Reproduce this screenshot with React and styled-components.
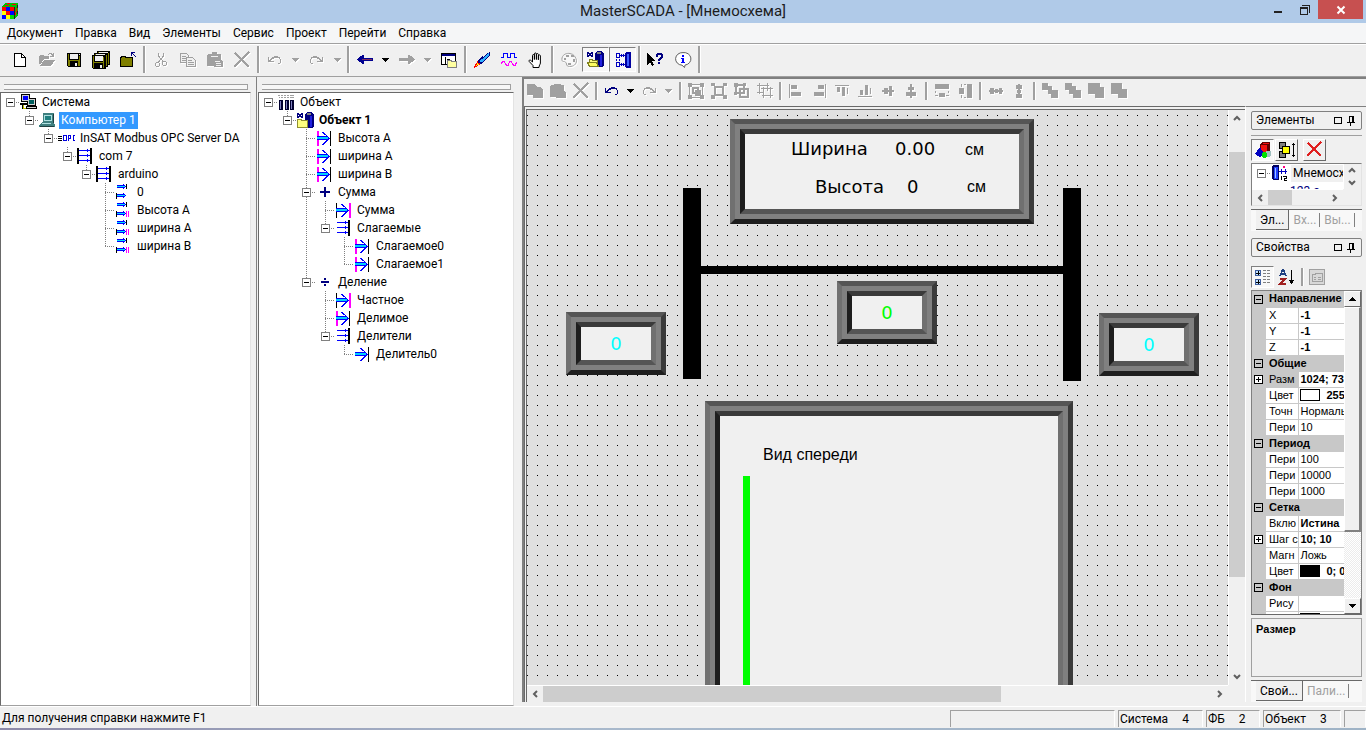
import React from 'react';
import styled, { createGlobalStyle, css } from 'styled-components';

const Global = createGlobalStyle`
  * { box-sizing: border-box; }
  html, body, #root { height: 100%; margin: 0; }
  body { background: #f0f0f0; color: #000; font: 12px/18px Roboto, "Open Sans", "Noto Sans", sans-serif; overflow: hidden; }
  button { font: inherit; color: inherit; background: none; border: 0; padding: 0; margin: 0; }
  ul { list-style: none; margin: 0; padding: 0; }
  svg { display: block; flex: none; overflow: visible; }
`;

/* ---------- window shell ---------- */
const Shell = styled.div`display: flex; flex-direction: column; height: 100vh; min-height: 0;`;
const TitleBar = styled.header`
  display: grid; grid-template-columns: 1fr auto 1fr; height: 23px; flex: none; background: #b0cae8;
`;
const AppMark = styled.div`padding: 3px 0 0 2px;`;
const Title = styled.h1`margin: 0; font-size: 15px; line-height: 23px; font-weight: 400; color: #1c1c1c;`;
const Caption = styled.div`display: flex; justify-content: flex-end; padding-right: 3px;`;
const CaptionButton = styled.button`
  width: ${p => (p.$close ? 45 : 27)}px; height: 19px; display: grid; place-items: center;
  background: ${p => (p.$close ? '#c75050' : 'transparent')};
`;
const MenuBar = styled.nav`
  display: flex; height: 21px; flex: none; background: #f5f6f7; border-bottom: 1px solid #a0a0a0; padding-left: 1px;
`;
const MenuItem = styled.button`padding: 0 6px; height: 20px; line-height: 20px;`;
const Toolbar = styled.div`
  display: flex; align-items: center; height: 33px; flex: none; padding: 0 0 2px 6px;
  border-top: 1px solid #fff; border-bottom: 1px solid #a0a0a0;
`;
const ToolButton = styled.button`
  width: ${p => p.$w || 27}px; height: 25px; display: grid; place-items: center; flex: none;
  ${p => p.disabled && css`svg { filter: drop-shadow(1px 1px 0 #fff); }`}
  ${p => p.$pressed && css`
    border: 1px solid; border-color: #808080 #fff #fff #808080; background: #f7f7f7;
  `}
`;
const Separator = styled.span`
  width: ${p => p.$w || 6}px; height: ${p => (p.$w ? 18 : 27)}px; flex: none;
  &::before { content: ''; display: block; width: 2px; height: 100%; margin: 0 auto;
    background: #a0a0a0; border-right: 1px solid #fff; }
`;

/* ---------- body ---------- */
const Work = styled.main`display: flex; flex: 1; min-height: 0;`;
const Dock = styled.section`
  display: flex; flex-direction: column; flex: none; width: ${p => p.$w}px; padding: 7px ${p => p.$pr}px 0 ${p => p.$pl}px;
  border-left: ${p => p.$pl}px solid #808080;
`;
const Grip = styled.div`
  height: 6px; margin: 0 3px 2px 4px; border: solid #a0a0a0; border-width: 1px 1px 1px 0; flex: none; background: #f7f7f7;
`;
const TreeBox = styled.ul`
  flex: 1; min-height: 0; background: #fff; border: 1px solid #696969; border-right-color: #e3e3e3; border-bottom-color: #a0a0a0;
  overflow: hidden;
`;
const TreeRow = styled.li`display: flex; height: 18px; align-items: center;`;
const dotV = 'repeating-linear-gradient(#808080 0 1px, transparent 1px 2px)';
const dotH = 'repeating-linear-gradient(90deg, #808080 0 1px, transparent 1px 2px)';
const GuideCell = styled.span`
  width: 19px; height: 18px; flex: none; display: grid; place-items: center;
  background-repeat: no-repeat;
  background-image: ${p => (p.$v ? dotV : 'none')}, ${p => (p.$elbow ? dotH : 'none')};
  background-size: 1px ${p => (p.$v === 'half' ? 9 : 18)}px, 10px 1px;
  background-position: 9px 0, 9px 9px;
`;
const Expander = styled.button`
  && { width: 9px; height: 9px; border: 1px solid #808080; background: #fff; display: grid; place-items: center; }
  &::before { content: ''; width: 5px; height: 1px; background: #000; }
`;
const NodeIcon = styled.span`width: 20px; height: 18px; flex: none; display: grid; align-items: center;`;
const NodeLabel = styled.span`
  padding: 0 2px; line-height: 17px; white-space: nowrap;
  font-weight: ${p => (p.$bold ? 700 : 400)};
  ${p => p.$selected && css`background: #3399ff; color: #fff;`}
`;

/* ---------- mnemonic window ---------- */
const Child = styled.section`
  flex: 1; min-width: 0; display: flex; flex-direction: column; margin-bottom: 4px;
  border: solid #808080; border-width: 2px 0 0 2px;
`;
const ChildToolbar = styled.div`display: flex; align-items: center; height: 27px; flex: none; margin-left: -2px; padding-bottom: 3px; border-left: 1px solid #808080;`;
const ChildBody = styled.div`display: flex; flex: 1; min-height: 0;`;
const View = styled.div`
  flex: 1; min-width: 0; display: grid; grid-template: minmax(0, 1fr) 17px / minmax(0, 1fr) 17px;
  border: solid #696969; border-width: 4px 0 0 3px; border-style: double solid solid double; border-bottom: 0; border-right: 0;
`;
const Canvas = styled.div`
  position: relative; overflow: hidden; background: #e0e0e0 conic-gradient(from 270deg at 1px 1px, #000 90deg, transparent 0) 0 5px / 10px 10px;
`;
const Placed = styled.div`
  position: absolute; left: ${p => p.$x}px; top: ${p => p.$y}px;
  width: ${p => p.$w}px; height: ${p => p.$h}px;
`;
const Bevel = styled(Placed)`
  padding: 5px; background: #808080;
  border: 5px solid; border-color: #555 #3a3a3a #1e1e1e #707070;
`;
const Face = styled.div`
  height: 100%; background: #f0f0f0; border: 5px solid; border-color: #3a3a3a #707070 #555 #1e1e1e;
  display: grid; place-items: center; color: ${p => p.$c}; font: 18px/22px "DejaVu Sans", sans-serif;
`;
const Bar = styled(Placed)`background: ${p => p.$c || '#000'};`;
const CanvasText = styled.span`
  position: absolute; left: ${p => p.$x}px; top: ${p => p.$y}px; white-space: nowrap;
  font: ${p => (p.$plain ? '16px/20px "Liberation Sans"' : '18px/20px "DejaVu Sans"')}, sans-serif;
`;
const Scroll = styled.div`
  display: flex; flex-direction: ${p => (p.$v ? 'column' : 'row')}; background: #f0f0f0; min-width: 0; min-height: 0;
  border: solid #fff; border-width: ${p => (p.$v ? '0 0 0 1px' : '1px 0 0')};
`;
const ScrollButton = styled.button`width: ${p => p.$w || 16}px; height: ${p => p.$h || 16}px; flex: none; display: grid; place-items: center;`;
const Track = styled.div`flex: 1; display: flex; flex-direction: inherit; min-width: 0; min-height: 0;`;
const Gap = styled.span`flex: ${p => p.$n} 1 0;`;
const Thumb = styled.span`flex: ${p => p.$n} 1 0; background: #cdcdcd;`;

/* ---------- right side ---------- */
const Side = styled.aside`
  width: 121px; flex: none; display: flex; flex-direction: column; padding: 4px 4px 0 5px;
  border-left: 1px solid #fff; border-top: 1px solid #808080; min-height: 0;
`;
const PaneTitle = styled.h2`
  height: 19px; flex: none; margin: 0; font-size: 12px; line-height: 17px; font-weight: 400; border: 1px solid #808080; border-radius: 2px;
  display: flex; align-items: center; gap: 5px; padding: 0 6px 0 4px; span { flex: 1; }
`;
const PaneTools = styled.div`
  display: flex; align-items: center; height: 28px; margin-top: 5px; flex: none; border-top: 1px solid ${p => (p.$flat ? 'transparent' : '#a0a0a0')};
`;
const RaisedButton = styled.button`
  && { width: 23px; height: 22px; margin-right: ${p => p.$mr || 1}px; display: grid; place-items: center; flex: none;
  border: 1px solid; border-color: ${p => (p.$down ? '#808080 #fff #fff #808080' : p.$flat ? 'transparent' : '#fff #696969 #696969 #fff')};
  background: ${p => (p.$down ? '#f8f8f8' : '#f0f0f0')}; }
`;
const MiniTree = styled.div`
  height: 43px; flex: none; display: grid; grid-template: 25px 16px / minmax(0, 1fr) 18px;
  border: 1px solid; border-color: #808080 #e3e3e3 #e3e3e3 #808080;
`;
const MiniList = styled.div`background: #fff; overflow: hidden; ${NodeLabel} { background: #f0f0f0; }`;
const MiniRow = styled.div`display: flex; height: 18px; align-items: center;`;
const MiniChild = styled.div`padding-left: 38px; line-height: 18px; height: 18px; color: #000080; white-space: nowrap;`;
const Tabs = styled.div`
  height: 22px; margin-top: 3px; flex: none; display: flex; padding: 0 0 1px 5px; background: #f8f8f8; border-top: 1px solid #696969;
`;
const Tab = styled.button`
  && { flex: none; height: 20px; line-height: 20px; padding: 0 4px; color: #a0a0a0; position: relative;
  ${p => p.$on && css`color: #000; background: #f0f0f0; border: solid #696969; border-width: 0 1px 1px 0;`} }
  &:not(:first-child)::after { content: ''; position: absolute; right: 0; top: 3px; width: 1px; height: 14px; background: #808080; }
`;
const PaneSpacer = styled.div`height: 7px; flex: none;`;
const PropsBox = styled.div`
  flex: 1; min-height: 0; display: flex; border: 1px solid; border-color: #808080 #808080 #696969 #808080;
  overflow: hidden;
`;
const PropsScroll = styled.div`flex: 1; min-width: 0; overflow: hidden;`;
const PropsTable = styled.table`
  border-collapse: collapse; table-layout: fixed; width: 100%; font: 11px/15px "Liberation Sans", sans-serif;
  tr { height: 16px; }
  th, td { padding: 0 0 0 3px; height: 16px; text-align: left; white-space: nowrap; overflow: hidden; font-weight: 400;
    border-bottom: 1px solid #c8c8c8; background: #fff; }
  td { border-left: 1px solid #c8c8c8; }
`;
const PropMark = styled.td`
  && { width: 14px; background: #c8c8c8; padding: 0 0 0 2px; border: 0; }
`;
const GroupName = styled.th`&&& { background: #c8c8c8; font-weight: 700; }`;
const PropName = styled.th`&&& { ${p => p.$sel && css`background: #c8c8c8;`} }`;
const PropValue = styled.td`&& { padding-left: 2px; font-weight: ${p => (p.$b ? 700 : 400)}; }`;
const Swatch = styled.span`
  display: inline-block; vertical-align: middle; width: 20px; height: 12px; margin: 0 7px 1px -1px; border: 1px solid #000; background: ${p => p.$c};
`;
const Sign = styled.button`
  && { display: grid; place-items: center; width: 9px; height: 9px; border: 1px solid #000; background: ${p => (p.$plus ? '#fff' : 'transparent')}; }
`;
const OldScroll = styled.div`
  width: 17px; flex: none; display: flex; flex-direction: column;
  background: repeating-conic-gradient(#fff 0 25%, #ececec 0 50%) 0 0 / 2px 2px;
`;
const OldButton = styled.button`
  && { height: 16px; flex: none; display: grid; place-items: center; background: #f0f0f0; border: 1px solid; border-color: #fff #696969 #696969 #fff; }
`;
const OldThumb = styled.span`flex: 224 1 0; background: #f0f0f0; border: solid; border-width: 1px 2px 2px 1px; border-color: #fff #808080 #808080 #fff;`;
const Description = styled.div`
  height: 59px; flex: none; margin-top: 3px; border: 1px solid #a0a0a0; padding: 2px 4px; font: 700 11px/16px "Liberation Sans", sans-serif;
`;

/* ---------- status ---------- */
const Status = styled.footer`
  display: flex; gap: 3px; height: 22px; flex: none; padding: 3px 0 1px 2px; border-top: 1px solid #fff; line-height: 17px;
`;
const StatusHint = styled.span`flex: 1;`;
const StatusCell = styled.span`
  width: ${p => p.$w}px; border: solid #a0a0a0; border-width: 1px 0 0 1px; border-right: 1px solid #fff; padding-left: 1px;
  display: flex; gap: 14px; white-space: nowrap;
`;
const DesktopEdge = styled.div`height: 2px; flex: none; background: linear-gradient(90deg, #8c88a8, #a9b9cc 40%, #9fb3c6);`;

/* ---------- icons ---------- */
const G = '#a0a0a0';
const Svg = ({ w = 16, h = 16, children, smooth }) => (
  <svg width={w} height={h} viewBox={`0 0 ${w} ${h}`} fill="none" shapeRendering={smooth ? 'auto' : 'crispEdges'} aria-hidden="true">{children}</svg>
);
const Fill = ({ d, c = G }) => <path d={d} fill={c} />;
const Line = ({ d, c = G, w = 1, f = 'none' }) => <path d={d} stroke={c} strokeWidth={w} fill={f} />;

const IconCube = () => (
  <Svg>
    <Fill c="#00c000" d="M3 0h13v12l-4 4h-4V4H0z" />
    <Fill c="#ff0000" d="M0 4h4v4H0zM8 4h4v4H8zM4 8h4v4H4z" /><Fill c="#0000ff" d="M4 4h4v4H4zM8 8h4v4H8zM0 12h4v4H0z" />
    <Fill c="#ffff00" d="M0 8h4v4H0zM4 12h4v4H4z" /><Fill c="#00e000" d="M8 12h4v4H8z" />
    <Fill c="#ff0000" d="M5 0h3v1H5zM10 1h4v1h-4zM3 2h4v1H3zM14 5h1v4h-1zM13 9h1v3h-1z" />
    <Fill c="#202020" d="M12 4h1v12h-1zM15 2h1v3h-1zM15 8h1v3h-1z" />
  </Svg>
);
const IconNew = () => <Svg><Line c="#000" f="#fff" d="M2.500 1.500h7l4 4v9h-11z" /><Line c="#000" d="M9.500 1.500v4h4" /></Svg>;
const IconOpen = () => <Svg><Fill d="M0 4h1v-1h4v1h5v3H5l-3 5H0zM5 8h11l-4 6H1zM9 2h1v-1h3v1h1v-1h1v4h-4v-1h2v-1h-1V2h-2v1H9z" /></Svg>;
const IconSave = () => <Svg><Fill c="#000" d="M1 1h14v14H2l-1-1z" /><Fill c="#808000" d="M2 2h1v12H2zM13 4h1v10h-1zM3 8h10v1H3zM3 9h1v5H3zM12 9h1v5h-1z" /><Fill c="#f0f0f0" d="M4 2h8v5H4zM9 11h2v3H9zM13 2h1v1h-1z" /></Svg>;
const IconSaveAll = () => <Svg w={18} h={18}><Fill c="#000" d="M5 0h13v14h-2v2h-2v2H1l-1-1V4h2V2h3z" /><Fill c="#808000" d="M1 5h1v12H1zM3 3h1v1H3zM6 1h1v1H6zM16 2h1v11h-1zM14 4h1v11h-1zM11 6h1v11h-1zM2 11h10v1H2z" /><Fill c="#f0f0f0" d="M3 5h8v5H3zM4 3h9v1H4zM7 1h9v1H7zM8 14h2v3H8z" /></Svg>;
const IconUp = () => <Svg><Line c="#000" f="#808000" d="M.5 14.500v-9h1v-1h4v1h7v9z" /><Fill c="#000" d="M12 6h1v9H1v-1h11z" /><Fill c="#000080" d="M11 0h4v1h-2v1h1v1h1v1h1v1h-1V4h-1V3h-1V2h-1v2h-1z" /></Svg>;
const IconCut = () => <Svg><Line d="M5.500 1v3l5 6M10.500 1v3l-5 6" /><Line d="M3.500 10.500h2l1 1v2l-1 1h-2l-1-1v-2zM10.500 9.500h2l1 1v2l-1 1h-2l-1-1v-2z" /></Svg>;
const IconCopy = () => <Svg><Line f="#f0f0f0" d="M.5 1.500h6l2 2v7h-8z" /><Line d="M2 4.500h4M2 6.500h4M2 8.500h4" /><Line f="#f0f0f0" d="M6.500 5.500h6l3 3v6h-9z" /><Line d="M8 8.500h4M8 10.500h6M8 12.500h6" /></Svg>;
const IconPaste = () => <Svg><Fill d="M1 2h4V0h5v2h4v6h1l1 2v5H7v-1H0V3z" /><Line c="#f0f0f0" d="M4 4.500h7M8 9.500h5M9 11.500h5M9 13.500h5" /></Svg>;
const IconDelete = ({ c = G, s = 16 }) => <Svg w={s} h={s}><path d={`M1 1L${s - 1} ${s - 1}`} stroke={c} strokeWidth="2" /><path d={`M${s - 1} 0L0 ${s - 1}`} stroke={c} strokeWidth="1.6" /></Svg>;
const IconUndo = ({ c = G }) => <Svg w={13} h={10}><Fill c={c} d="M0 2h1v3h1V4h1V3h1V2h2V1h4v1h2v2h1v4h-1v1h-2V8h2V4h-1V3H6v1H4v1H3v1h3v1H0z" /></Svg>;
const IconRedo = ({ c = G }) => <Svg w={13} h={10}><Fill c={c} d="M13 2h-1v3h-1V4h-1V3H9V2H7V1H3v1H1v2H0v4h1v1h2V8H1V4h1V3h5v1h2v1h1v1H7v1h6z" /></Svg>;
const IconDrop = ({ c = G }) => <Svg w={7} h={4}><Fill c={c} d="M0 0h7v1H6v1H5v1H4v1H3V3H2V2H1V1H0z" /></Svg>;
const IconArrow = ({ c = G, back }) => <Svg w={16} h={9}><g transform={back ? 'matrix(-1 0 0 1 16 0)' : undefined}><Fill c={c} d="M0 3h9V0h2v1h2v1h1v1h1v1h1v1h-1v1h-1v1h-2v1h-1v1H9V6H0z" />{back && <Fill c="#803060" d="M1 4h10v1H1z" />}</g></Svg>;
const IconWindow = () => <Svg><Line c="#000" f="#fff" d="M.5 1.500h14v11H.5z" /><Fill c="#000080" d="M1 2h13v2H1z" /><Line c="#000" d="M4.500 5v7M6 7.500h3" /><Line c="#808080" f="#ffffa0" d="M6.500 15.500v-7h4v1h5v6z" /></Svg>;
const IconRocket = () => <Svg><Fill c="#000080" d="M16 0v3L8 12H5l-1-1V8l4-4 1 1 4-4z" /><Fill c="#30b0ff" d="M14 1h1v2l-7 7H6V8l1-1 1 1z" /><Fill c="#ff0000" d="M3 9h1v2h2v2H4v1H3v1H1v1H0v-2h1v-2h1v-1h1z" /><Fill c="#ffff00" d="M3 11h1v1h1v1H3v1H2v-1h1z" /></Svg>;
const IconWave = () => <Svg><Line c="#0000ff" d="M0 5.500h2.500v-4h4v4h3v-4h4v4H16" /><Line c="#ff00ff" d="M0 11.500l2-2h1l2 3v1h2v-1l2-3h1l2 3v1h2v-1l2-2" /></Svg>;
const IconHand = () => <Svg smooth><path d="M5 15.500v-2L1.200 9.500c-.7-1 .5-2 1.500-1.200L4.500 10V3.500c0-1.300 1.800-1.300 1.900 0V7.500 2c0-1.400 2-1.400 2 0v5.500-5c0-1.300 1.900-1.300 2 0v5.300-4c0-1.200 2-1.200 2 0V11c0 1.500-1.400 2-1.400 4.500z" fill="#fff" stroke="#000" /></Svg>;
const IconPalette = () => <Svg smooth><path d="M1 6C2 2 6 1 9 1.500c4 .5 6 4 6.500 7 0 4-3 6-7 6-2 0-3-1-3-2.500S4 9.500 2.500 9.500 .7 8 1 6z" stroke={G} fill="#f8f8f8" /><path d="M5 3h3v2H5zM10 3h3v2h-3zM3 6h2v2H3zM7 11h3v2H7zM12 7h2v3h-2z" fill={G} /></Svg>;
const IconTank = () => <Svg w={17} h={17}><Line c="#000080" d="M.5 1v5M5.500 1v5M1 1.500l4 4M5 1.500l-4 4" /><Fill c="#000080" d="M10 0h4l2 1 1 2v12l-2 1h-5l-2-2V2z" /><Fill c="#808080" d="M10 1h4v2h-4z" /><Fill c="#2020e0" d="M13 4h2v11h-2z" /><Line c="#909030" f="#ffff80" d="M.5 15.500v-8h4v1h6v7z" /></Svg>;
const IconTankOpen = () => <Svg w={17} h={17}><Line c="#000080" d="M.5 1v5M5.500 1v5M1 1.500l4 4M5 1.500l-4 4" /><Fill c="#000080" d="M10 0h4l2 1 1 2v12l-2 1h-5l-2-2V2z" /><Fill c="#808080" d="M10 1h4v2h-4z" /><Fill c="#2020e0" d="M13 4h2v11h-2z" /><Line c="#808020" f="#ffff80" d="M2.500 12v-4h3v1h5v3" /><Line c="#808020" f="#ffff60" d="M.5 11.500h9l2 4h-9z" /></Svg>;
const IconPipes = () => <Svg><Line c="#0000c0" d="M1.500 1.500h3v4h-3zM1.500 10.500h3v4h-3zM5 3.500h5M5 12.500h5M6.500 2v3M8.500 2v3M6.500 11v3M8.500 11v3M1.500 7v2M4.500 7v2" /><Fill c="#0000a0" d="M10 1l1-1h4l1 1v14l-1 1h-4l-1-1z" /><Fill c="#4060ff" d="M12 2h2v12h-2z" /></Svg>;
const IconHelp = () => <Svg w={17}><Fill c="#000" d="M0 1l8 8H5l2 4-2 1-2-4-3 3z" /><Fill c="#000080" d="M9 2h1V1h5v1h1v4h-1v1h-1v1h-1v1h-2V7h1V6h1V5h1V3h-3v2H9zM11 10h2v2h-2z" /></Svg>;
const IconInfo = () => <Svg smooth><path d="M8 .6a6.900 6.300 0 0 1 2 12.500L9.500 15.500 7 13.200A6.900 6.300 0 0 1 8 .6z" fill="#fff" stroke="#606060" /><path d="M7 3h2v2H7zM6 6h3v4h1v1H6v-1h1V7H6z" fill="#0000ff" shapeRendering="crispEdges" /></Svg>;

const IconCopySolid = () => <Svg><Fill d="M0 1h7l3 3h3l3 3v8H6v-3H0z" /></Svg>;
const IconPasteSolid = () => <Svg><Fill d="M1 2h3V1h7v1h3v6h1l1 2v5H6v-1H0V3z" /></Svg>;
const IconGroup = ({ n }) => (
  <Svg w={16} h={16}>
    {n === 0 && <><Fill d="M0 0h4v4H0zM12 0h4v4h-4zM0 12h4v4H0zM12 12h4v4h-4z" /><Line d="M4 1.500h8M4 14.500h8M1.500 4v8M14.500 4v8" /><Line w={2} d="M5 5h5v5H5zM8 8h4v4H8z" /></>}
    {n === 1 && <><Fill d="M0 0h4v3H0zM12 0h4v3h-4zM0 12h4v4H0zM12 12h4v4h-4z" /><Line w={2} d="M4 4h8v8H4z" /></>}
    {n === 2 && <><Line w={2} d="M2 2h8v8H2zM6 6h8v8H6z" /><Fill d="M0 0h4v4H0zM9 0h3v3H9zM0 9h3v3H0z" /></>}
    {n === 3 && <><Line d="M2.500 0v11M0 2.500h12M10.500 0v8M0 9.500h7" /><Line d="M6.500 4v11M4 5.500h12M13.500 4v11M5 12.500h11" /></>}
  </Svg>
);
const alignPaths = [
  'M1 1h1v14H1zM3 2h6v4H3zM3 9h10v4H3z', 'M14 1h1v14h-1zM7 2h6v4H7zM3 9h10v4H3z',
  'M1 2h14v1H1zM3 4h3v5H3zM8 4h3v9H8zM13 5h1v6h-1z', 'M1 13h14v1H1zM3 7h3v5H3zM8 2h3v10H8zM13 5h1v6h-1z',
  'M2 7h12v2H2zM4 5h4v6H4zM9 3h3v10H9z', 'M7 1h2v14H7zM5 4h6v3H5zM3 9h10v4H3z',
  'M1 1h14v5H1zM5 10h6v4H5zM1 12h3v1H1zM12 12h3v1h-3zM1 8h1v2H1zM14 8h1v2h-1z', 'M10 1h5v14h-5zM2 5h5v6H2zM4 1h1v3H4zM4 12h1v3H4zM7 1h2v1H7zM7 14h2v1H7z',
  'M1 7h14v2H1zM2 5h4v6H2zM7 6h3v4H7zM11 5h3v6h-3z', 'M7 1h2v14H7zM5 2h6v4H5zM6 7h4v3H6zM5 11h6v4H5z',
  'M0 0h6v3h4v4h6v8H9v-4H6V7H0z', 'M0 0h7v3h4v4h5v8H8v-4H4V7H0z', 'M0 0h12v4h4v11H7v-4H0z', 'M0 0h11v6h5v9H7v-4H0z',
];
const IconAlign = ({ n }) => <Svg><Fill d={alignPaths[n]} /></Svg>;

const IconSystem = () => <Svg w={17}><Fill c="#000" d="M1 0h9v8H1zM0 9h7v2H0zM7 4h9v8H7zM6 12h11v3H6zM3 11h1v3h2v1H2v-4z" /><Fill c="#d0d0d0" d="M2 1h7v6H2zM8 5h7v6H8zM7 13h9v1H7z" /><Fill c="#0000ff" d="M3 2h5v4H3z" /><Fill c="#006060" d="M9 6h5v4H9z" /><Fill c="#c0c000" d="M3 11h1v3h2v1H3z" /></Svg>;
const IconPC = () => <Svg><Fill c="#408080" d="M4 1h10l1 1v8H4zM0 13l3-3h11l2 3v2H0z" /><Fill c="#b0e0e0" d="M5 3h8v6H5zM3 11h9v1H3z" /><Fill c="#208080" d="M6 4h6v4H6z" /><Fill c="#204040" d="M14 2h1v9h-1zM1 14h14v1H1z" /></Svg>;
const IconOpc = () => <Svg w={18} h={10}><Line c="#000" d="M0 3.500h4M0 5.500h4M0 7.500h4" /><Line c="#0000e0" d="M5.500 2.500h3v5h-3zM10.500 8V2.500h2v3h-2M17 2.500h-2v5h2" /></Svg>;
const IconBus = ({ left }) => <Svg>{left && <Fill c="#000" d="M0 0h2v16H0z" />}<Fill c="#000" d="M13 0h2v16h-2z" /><Fill c="#0000ff" d="M2 2h11v1H2zM2 7h11v1H2zM2 12h11v1H2zM10 1h1v3h-1zM10 6h1v3h-1zM10 11h1v3h-1z" /></Svg>;
const IconTag = ({ pink }) => <Svg><Fill c="#0000ff" d="M2 1h6V0h1v1h1v1h1v1h-1v1H9v1H8V4H2zM2 10h6V9h1v1h1v1h1v1h-1v1H9v1H8v-1H2z" /><Fill c="#00e0ff" d="M2 2h8v1H2zM2 11h8v1H2z" /><Fill c="#000" d="M11 0h1v5h-1zM1 9h1v6H1z" />{pink && <Fill c="#ff00ff" d="M11 9h1v6h-1zM13 9h1v6h-1z" />}</Svg>;
const IconFlow = ({ l, r = '#000' }) => <Svg>{l && <path d={l === '#000' ? 'M1 1h1v15H1z' : 'M1 1h2v15H1z'} fill={l} />}<path d={r === '#000' ? 'M14 1h1v15h-1z' : 'M14 1h2v15h-2z'} fill={r} /><Fill c="#0000ff" d="M6 2h2v1h1v1h1v1h1v1h1v1h1v1h1v1h-1v1h-1v1h-1v1h-1v1H9v1H8v1H6v-1h1v-1h1v-1h1v-1h1v-1H1V6h9V5H9V5H8V4H7V3H6z" /><Fill c="#00d0ff" d="M1 7h11v2H1z" /></Svg>;
const IconFactory = () => <Svg><Fill c="#000030" d="M1 6h4v10H1zM7 6h4v10H7zM12 6h4v10h-4z" /><Fill c="#8080c0" d="M2 7h1v8H2zM8 7h1v8H8zM13 7h1v8h-1z" /><Line d="M0 1.500h16M1 3.500h15" /><Line c="#fff" d="M2.500 0v5M5.500 0v5M8.500 0v5M11.500 0v5" /></Svg>;
const IconPlus = () => <Svg w={18}><Fill c="#000080" d="M4 7h10v2H4zM8 3h2v10H8z" /></Svg>;
const IconDivide = () => <Svg w={18}><Fill c="#000080" d="M5 7h8v2H5zM8 4h2v2H8zM8 10h2v2H8z" /></Svg>;
const Chevron = ({ dir }) => {
  const d = { up: 'M1 6l3-3 3 3', down: 'M1 2l3 3 3-3', left: 'M6 1L3 4l3 3', right: 'M2 1l3 3-3 3' }[dir];
  return <Svg w={8} h={8} smooth><Line c="#606060" w={2} d={d} /></Svg>;
};
const IconPin = () => <Svg w={8} h={10}><Line c="#000" d="M2.500 0v6M2 .5h4M0 6.500h8M3.500 7v3" /><Fill c="#000" d="M5 0h2v6H5z" /></Svg>;
const IconBox = () => <Svg w={8} h={7}><Line c="#000" d="M.5 .5h7v6h-7z" /></Svg>;
const IconShapes = () => <Svg><Fill c="#600000" d="M5 2l3-2h7v8l-3 3H5z" /><Fill c="#f01010" d="M6 3h6v7H6zM8 1h6v1H8z" /><Fill c="#0000c0" d="M0 12l5-7 4 7-4 3z" /><Fill c="#a0c0c0" d="M11 9h5v4l-2 2h-4z" /><circle cx="9.500" cy="13" r="3" fill="#00e000" /></Svg>;
const IconLayers = () => <Svg><Line c="#000" f="#808080" d="M.5 .5h6v6h-6zM.5 9.500h6v6h-6z" /><Line c="#000" f="#ffff00" d="M3.500 4.500h7v7h-7z" /><Line c="#000" d="M14.500 1v14M13 2.500h3M13 13.500h3" /></Svg>;
const IconMnemo = () => <Svg><Fill c="#000060" d="M1 1l1-1h5l1 1v13l-1 1H2l-1-1z" /><Fill c="#2040ff" d="M3 2h4v12H3z" /><Fill c="#a0c0ff" d="M4 3h1v10H4z" /><Line c="#0000c0" d="M8 6.500h8M10.500 4v5M14.500 4v5" /><Fill c="#ff0080" d="M12 1h2v2h-2z" /><Line c="#000" d="M10.500 11v4M12 11.500h3v2h-2v2h3" /></Svg>;
const IconCats = () => <Svg w={18}><Line c="#4060a0" f="#c0e0ff" d="M1.500 1.500h5v5h-5zM1.500 10.500h5v5h-5z" /><Line c="#000" d="M2 4h4M4 2v4M2 13h4M4 11v4" /><Line c="#808080" d="M9 1.500h3M13 1.500h3M9 4.500h3M13 4.500h3M9 7.500h3M13 7.500h3M9 10.500h3M13 10.500h3M9 13.500h3M13 13.500h3" /></Svg>;
const IconSort = () => <Svg><Line c="#204080" w={1.500} d="M1 7l2.500-6h1L7 7M2 5h4" /><Line c="#a02020" w={1.500} d="M1 10h5l-5 5h6" /><Fill c="#000" d="M12 1h1v10h2l-2 4h-1l-2-4h2z" /></Svg>;
const IconPage = () => <Svg><Fill c="#c8c8c8" d="M0 0h16v16H0z" /><Line f="#d8d8d8" d="M.5 .5h15v15H.5zM3.500 5.500h3v-1h7v8h-10z" /><Line d="M5 8.500h2M9 8.500h3M5 10.500h2M9 10.500h3" /></Svg>;

/* ---------- data ---------- */
const menu = ['Документ', 'Правка', 'Вид', 'Элементы', 'Сервис', 'Проект', 'Перейти', 'Справка'];
const N = '#000080';
const mainTools = [
  ['Создать', <IconNew />], ['Открыть', <IconOpen />, 1], ['Сохранить', <IconSave />], ['Сохранить все', <IconSaveAll />], ['Вверх', <IconUp />], '|',
  ['Вырезать', <IconCut />, 1], ['Копировать', <IconCopy />, 1], ['Вставить', <IconPaste />, 1], ['Удалить', <IconDelete />, 1], '|',
  ['Отменить', <IconUndo />, 1], ['v', <IconDrop />, 1], ['Вернуть', <IconRedo />, 1], ['v', <IconDrop />, 1], '|',
  ['Назад', <IconArrow back c="#000090" />], ['v', <IconDrop c="#000" />], ['Вперед', <IconArrow />, 1], ['v', <IconDrop />, 1], ['Окно', <IconWindow />], '|',
  ['Запуск', <IconRocket />], ['Тренды', <IconWave />], ['Рука', <IconHand />], '|',
  ['Палитра', <IconPalette />, 1], ['Объекты', <IconTankOpen />, 0, 1], ['Связи', <IconPipes />, 0, 1], '|',
  ['Справка', <IconHelp />], ['Информация', <IconInfo />], '|',
];
const al = n => ['Выравнивание', <IconAlign n={n} />, 1];
const gr = n => ['Группировка', <IconGroup n={n} />, 1];
const childTools = [
  ['Копировать', <IconCopySolid />, 1], ['Вставить', <IconPasteSolid />, 1], ['Удалить', <IconDelete />, 1], '|',
  ['Отменить', <IconUndo c={N} />], ['v', <IconDrop c="#000" />], ['Вернуть', <IconRedo />, 1], ['v', <IconDrop />, 1], '|',
  gr(0), gr(1), gr(2), gr(3), '|', al(0), al(1), al(2), al(3), al(4), al(5), '|', al(6), al(7), '|', al(8), al(9), '|', al(10), al(11), al(12), al(13),
];
const M = '#ff00ff';
const inp = t => ({ t, i: <IconFlow l={M} /> });
const out = t => ({ t, i: <IconFlow l="#000" r={M} /> });
const systemTree = { t: 'Система', i: <IconSystem />, k: [
  { t: 'Компьютер 1', i: <IconPC />, sel: true, k: [
    { t: 'InSAT Modbus OPC Server DA', i: <IconOpc />, k: [
      { t: 'com 7', i: <IconBus left />, k: [
        { t: 'arduino', i: <IconBus left />, k: [
          { t: '0', i: <IconTag /> }, { t: 'Высота A', i: <IconTag pink /> }, { t: 'ширина A', i: <IconTag pink /> }, { t: 'ширина B', i: <IconTag pink /> },
        ] }] }] }] }] };
const objectTree = { t: 'Объект', i: <IconFactory />, k: [
  { t: 'Объект 1', i: <IconTank />, bold: true, k: [
    inp('Высота A'), inp('ширина A'), inp('ширина B'),
    { t: 'Сумма', i: <IconPlus />, k: [out('Сумма'), { t: 'Слагаемые', i: <IconBus />, k: [inp('Слагаемое0'), inp('Слагаемое1')] }] },
    { t: 'Деление', i: <IconDivide />, k: [out('Частное'), inp('Делимое'), { t: 'Делители', i: <IconBus />, k: [{ t: 'Делитель0', i: <IconFlow /> }] }] },
  ] }] };
const flatten = (node, guides = [], last = true, root = true) => [
  { node, guides, last, root },
  ...(node.k || []).flatMap((c, i, a) => flatten(c, root ? [false] : [...guides, !last], i === a.length - 1, false)),
];
const properties = [
  ['-', 'Направление'], ['', 'X', '-1', 1], ['', 'Y', '-1', 1], ['', 'Z', '-1', 1],
  ['-', 'Общие'], ['+', 'Разм', '1024; 73', 1, null, 1], ['', 'Цвет', '255', 1, '#fff'], ['', 'Точн', 'Нормаль'], ['', 'Пери', '10'],
  ['-', 'Период'], ['', 'Пери', '100'], ['', 'Пери', '10000'], ['', 'Пери', '1000'],
  ['-', 'Сетка'], ['', 'Вклю', 'Истина', 1], ['+', 'Шаг с', '10; 10', 1], ['', 'Магн', 'Ложь'], ['', 'Цвет', '0; 0', 1, '#000'],
  ['-', 'Фон'], ['', 'Рису', ''], ['', 'Цвет', '224', 1, '#e0e0e0'],
];

/* ---------- parts ---------- */
const Tools = ({ items, w, sep }) => items.map((it, i) => it === '|' ? <Separator key={i} $w={sep} /> : (
  <ToolButton key={i} type="button" aria-label={it[0] === 'v' ? 'Список' : it[0]} $w={it[0] === 'v' ? 15 : w} disabled={!!it[2]} $pressed={it[3]}>{it[1]}</ToolButton>
));
const Tree = ({ data, label }) => (
  <TreeBox aria-label={label}>
    {flatten(data).map(({ node, guides, last, root }, i) => (
      <TreeRow key={i}>
        {guides.map((g, j) => <GuideCell key={j} $v={g ? 'full' : undefined} />)}
        <GuideCell $v={root ? undefined : last ? 'half' : 'full'} $elbow>
          {node.k && <Expander type="button" aria-label="Свернуть" />}
        </GuideCell>
        <NodeIcon>{node.i}</NodeIcon>
        <NodeLabel $bold={node.bold} $selected={node.sel}>{node.t}</NodeLabel>
      </TreeRow>
    ))}
  </TreeBox>
);
const Display = ({ x, y, w = 100, h = 63, c, children }) => <Bevel $x={x} $y={y} $w={w} $h={h}><Face $c={c}>{children}</Face></Bevel>;
const PaneHead = ({ children }) => <PaneTitle><span>{children}</span><IconBox /><IconPin /></PaneTitle>;
const SignMark = ({ s }) => s ? (
  <Sign type="button" $plus={s === '+'} aria-label="Раскрыть"><Svg w={5} h={5}><Line c="#000" d={s === '+' ? 'M0 2.500h5M2.500 0v5' : 'M0 2.500h5'} /></Svg></Sign>
) : null;

export default function App() {
  return (
    <Shell>
      <Global />
      <TitleBar>
        <AppMark><IconCube /></AppMark>
        <Title>MasterSCADA - [Мнемосхема]</Title>
        <Caption>
          <CaptionButton type="button" aria-label="Свернуть"><Svg w={8} h={8}><Fill c="#222" d="M0 5h8v2H0z" /></Svg></CaptionButton>
          <CaptionButton type="button" aria-label="Восстановить"><Svg w={10} h={10}><Line c="#222" d="M.5 2.500h7v7h-7zM.5 3.500h7M2 .5h7.500v7" /></Svg></CaptionButton>
          <CaptionButton type="button" aria-label="Закрыть" $close><Svg w={8} h={8} smooth><Line c="#fff" w={2} d="M0.500 .5l7 7M7.500 .5l-7 7" /></Svg></CaptionButton>
        </Caption>
      </TitleBar>
      <MenuBar>{menu.map(m => <MenuItem key={m} type="button">{m}</MenuItem>)}</MenuBar>
      <Toolbar><Tools items={mainTools} /></Toolbar>
      <Work>
        <Dock $w={256} $pl={0} $pr={5}><Grip /><Tree data={systemTree} label="Система" /></Dock>
        <Dock $w={266} $pl={1} $pr={8}><Grip /><Tree data={objectTree} label="Объекты" /></Dock>
        <Child>
          <ChildToolbar><Tools items={childTools} w={23} sep={8} /></ChildToolbar>
          <ChildBody>
            <View>
              <Canvas>
                <Display x={203} y={9} w={304} h={105} />
                <CanvasText $x={264} $y={29}>Ширина</CanvasText><CanvasText $x={368} $y={29}>0.00</CanvasText><CanvasText $x={438} $y={30} $plain>см</CanvasText>
                <CanvasText $x={288} $y={67}>Высота</CanvasText><CanvasText $x={380} $y={67}>0</CanvasText><CanvasText $x={440} $y={67} $plain>см</CanvasText>
                <Bar $x={156} $y={78} $w={18} $h={191} />
                <Bar $x={536} $y={78} $w={18} $h={193} />
                <Bar $x={174} $y={156} $w={362} $h={8} />
                <Display x={39} y={202} c="#00ffff">0</Display>
                <Display x={310} y={171} c="#00ff00">0</Display>
                <Display x={572} y={203} c="#00ffff">0</Display>
                <Display x={178} y={291} w={368} h={420} />
                <CanvasText $x={236} $y={335} $plain>Вид спереди</CanvasText>
                <Bar $x={216} $y={366} $w={7} $h={320} $c="#00ff00" />
              </Canvas>
              <Scroll $v>
                <ScrollButton type="button" aria-label="Вверх"><Chevron dir="up" /></ScrollButton>
                <Track><Gap $n={26} /><Thumb $n={424} /><Gap $n={92} /></Track>
                <ScrollButton type="button" aria-label="Вниз"><Chevron dir="down" /></ScrollButton>
              </Scroll>
              <Scroll>
                <ScrollButton type="button" aria-label="Влево"><Chevron dir="left" /></ScrollButton>
                <Track><Thumb $n={457} /><Gap $n={210} /></Track>
                <ScrollButton type="button" aria-label="Вправо"><Chevron dir="right" /></ScrollButton>
              </Scroll>
            </View>
            <Side>
              <PaneHead>Элементы</PaneHead>
              <PaneTools>
                <RaisedButton type="button" aria-label="Элементы" $down><IconShapes /></RaisedButton>
                <RaisedButton type="button" aria-label="Слои" $mr={5}><IconLayers /></RaisedButton>
                <RaisedButton type="button" aria-label="Удалить"><IconDelete c="#e02020" s={15} /></RaisedButton>
              </PaneTools>
              <MiniTree>
                <MiniList>
                  <MiniRow>
                    <GuideCell $elbow><Expander type="button" aria-label="Свернуть" /></GuideCell>
                    <NodeIcon><IconMnemo /></NodeIcon><NodeLabel>Мнемосх</NodeLabel>
                  </MiniRow>
                  <MiniChild>123 а</MiniChild>
                </MiniList>
                <Scroll $v>
                  <ScrollButton $h={12} type="button" aria-label="Вверх"><Chevron dir="up" /></ScrollButton>
                  <ScrollButton $h={13} type="button" aria-label="Вниз"><Chevron dir="down" /></ScrollButton>
                </Scroll>
                <Scroll>
                  <ScrollButton $h={15} type="button" aria-label="Влево"><Chevron dir="left" /></ScrollButton>
                  <Track><Thumb $n={24} /><Gap $n={34} /></Track>
                  <ScrollButton $h={15} type="button" aria-label="Вправо"><Chevron dir="right" /></ScrollButton>
                </Scroll>
              </MiniTree>
              <Tabs><Tab type="button" $on>Эл...</Tab><Tab type="button">Вх...</Tab><Tab type="button">Вы...</Tab></Tabs>
              <PaneSpacer />
              <PaneHead>Свойства</PaneHead>
              <PaneTools $flat>
                <RaisedButton type="button" aria-label="По категориям" $down><IconCats /></RaisedButton>
                <RaisedButton type="button" aria-label="По алфавиту" $flat><IconSort /></RaisedButton>
                <Separator $w={6} />
                <RaisedButton type="button" aria-label="Страницы" $flat disabled><IconPage /></RaisedButton>
              </PaneTools>
              <PropsBox>
                <PropsScroll>
                  <PropsTable>
                    <colgroup><col width="14" /><col width="32" /><col /></colgroup>
                    <tbody>
                      {properties.map(([s, n, v, b, c, sel], i) => (
                        <tr key={i}>
                          <PropMark><SignMark s={s} /></PropMark>
                          {s === '-' ? <GroupName colSpan={2}>{n}</GroupName> : (
                            <><PropName $sel={sel} scope="row">{n}</PropName><PropValue $b={b}>{c && <Swatch $c={c} />}{v}</PropValue></>
                          )}
                        </tr>
                      ))}
                    </tbody>
                  </PropsTable>
                </PropsScroll>
                <OldScroll>
                  <OldButton type="button" aria-label="Вверх"><Svg w={7} h={4}><Fill c="#000" d="M3 0h1v1h1v1h1v1h1v1H0V3h1V2h1V1h1z" /></Svg></OldButton>
                  <Track><OldThumb /><Gap $n={66} /></Track>
                  <OldButton type="button" aria-label="Вниз"><IconDrop c="#000" /></OldButton>
                </OldScroll>
              </PropsBox>
              <Description>Размер</Description>
              <Tabs><Tab type="button" $on>Свой...</Tab><Tab type="button">Пали...</Tab></Tabs>
            </Side>
          </ChildBody>
        </Child>
      </Work>
      <Status>
        <StatusHint>Для получения справки нажмите F1</StatusHint>
        <StatusCell $w={165} />
        <StatusCell $w={85}><span>Система</span><span>4</span></StatusCell>
        <StatusCell $w={54}><span>ФБ</span><span>2</span></StatusCell>
        <StatusCell $w={78}><span>Объект</span><span>3</span></StatusCell>
        <StatusCell $w={22} />
      </Status>
      <DesktopEdge />
    </Shell>
  );
}
